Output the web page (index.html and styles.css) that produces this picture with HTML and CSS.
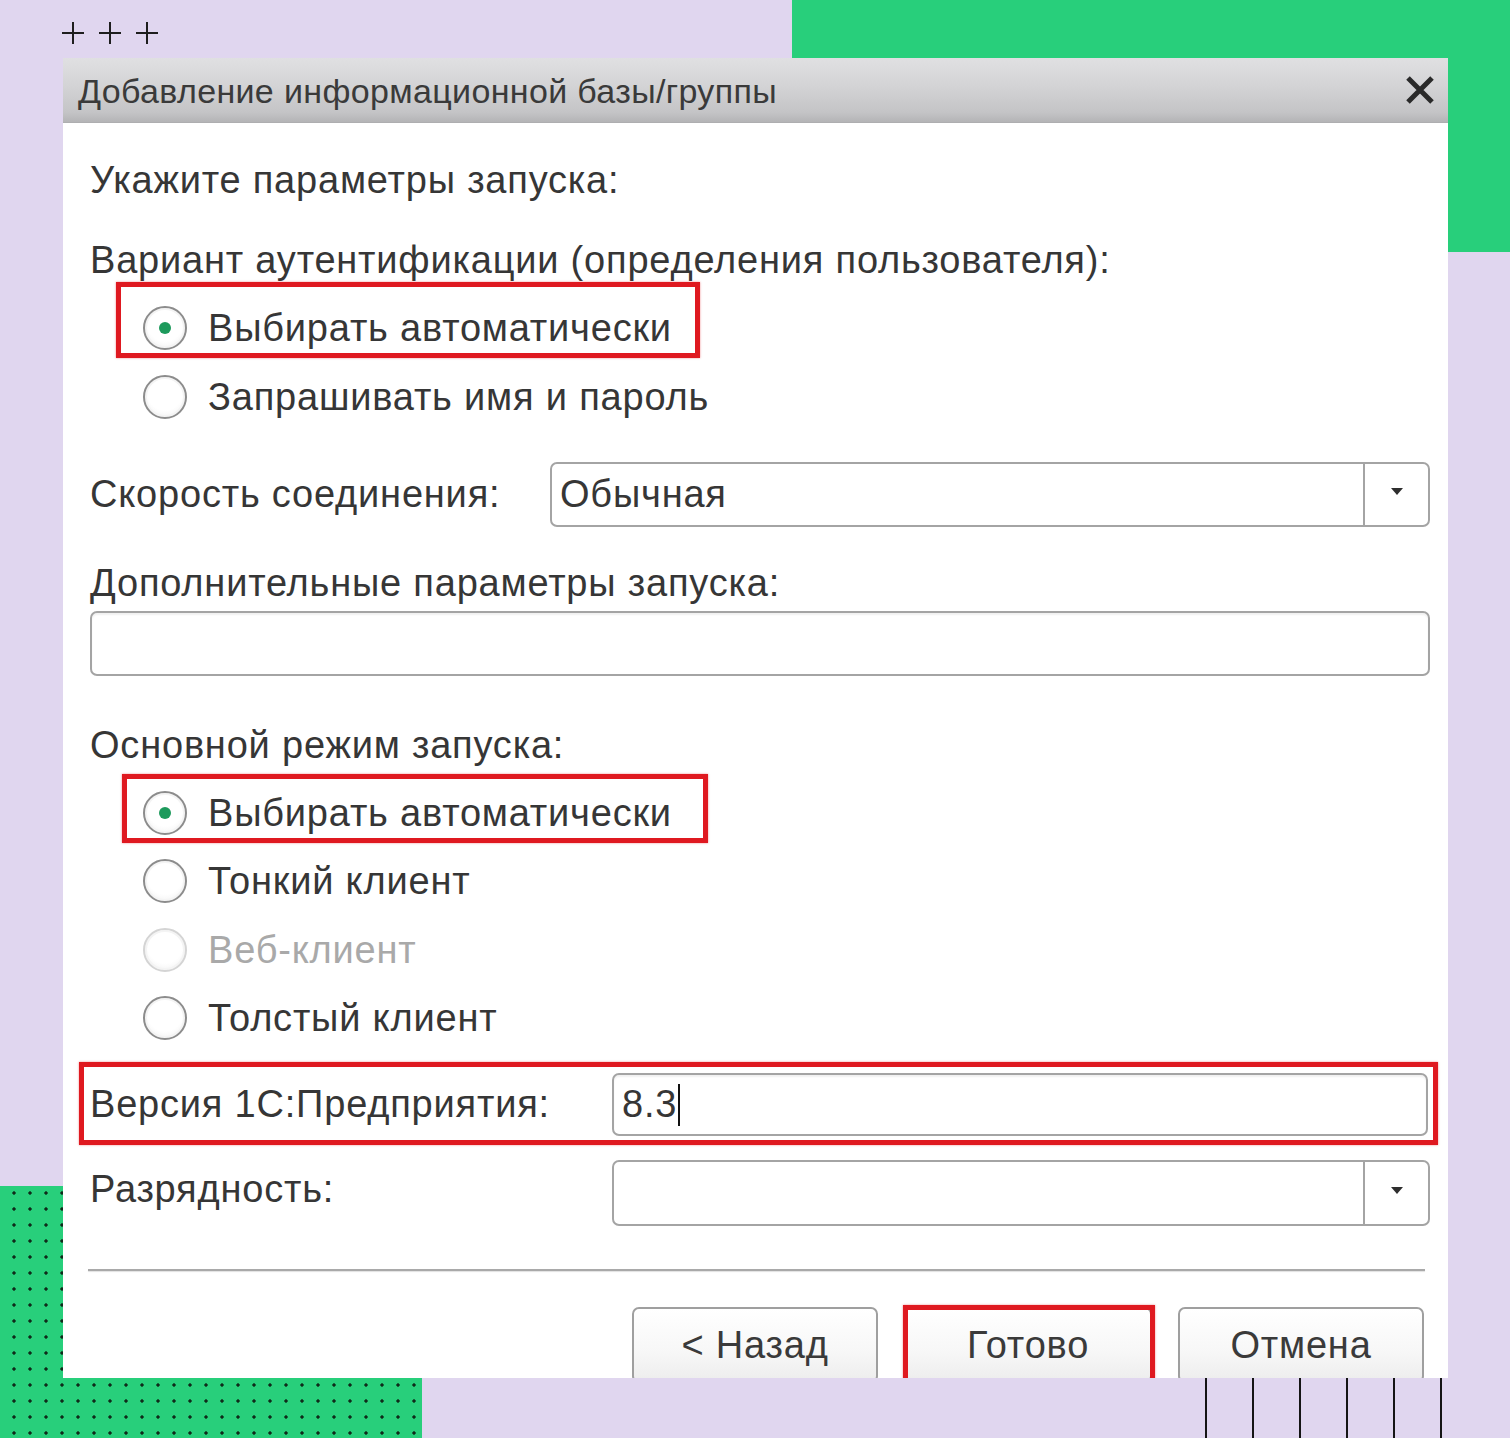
FILE: index.html
```html
<!DOCTYPE html>
<html lang="ru">
<head>
<meta charset="utf-8">
<title>Добавление информационной базы/группы</title>
<link rel="stylesheet" href="styles.css">
</head>
<body>
<div class="canvas">
  <div class="deco-green"></div>
  <div class="deco-dots"></div>
  <div class="deco-lines"></div>
  <svg class="deco-plus" width="110" height="28" viewBox="0 0 110 28">
    <path d="M2 13h22M13 2v22M39 13h22M50 2v22M76 13h22M87 2v22" stroke="#1e1e1e" stroke-width="2" fill="none"/>
  </svg>

  <div class="dialog">
    <div class="titlebar">
      <span class="title">Добавление информационной базы/группы</span>
      <svg class="close" width="30" height="30" viewBox="0 0 30 30">
        <path d="M3 3L27 27M27 3L3 27" stroke="#2a2a2a" stroke-width="5" fill="none"/>
      </svg>
    </div>

    <div class="content">
      <div class="row r-intro">Укажите параметры запуска:</div>
      <div class="row r-auth">Вариант аутентификации (определения пользователя):</div>
      <div class="row radio-row"><span class="radio checked"></span><span>Выбирать автоматически</span></div>
      <div class="row radio-row r-gap1"><span class="radio"></span><span>Запрашивать имя и пароль</span></div>

      <div class="field r-speed">
        <span class="label label-speed">Скорость соединения:</span>
        <div class="select">
          <span class="select-value">Обычная</span>
          <span class="select-btn"><i class="arrow"></i></span>
        </div>
      </div>

      <div class="row r-extra">Дополнительные параметры запуска:</div>
      <div class="input r-extra-input"></div>

      <div class="row r-mode">Основной режим запуска:</div>
      <div class="row radio-row"><span class="radio checked"></span><span>Выбирать автоматически</span></div>
      <div class="row radio-row"><span class="radio"></span><span>Тонкий клиент</span></div>
      <div class="row radio-row r-gap1 disabled"><span class="radio"></span><span>Веб-клиент</span></div>
      <div class="row radio-row"><span class="radio"></span><span>Толстый клиент</span></div>

      <div class="field r-version">
        <span class="label label-version">Версия 1С:Предприятия:</span>
        <div class="input input-version"><span>8.3</span><i class="caret"></i></div>
      </div>

      <div class="field r-bits">
        <span class="label label-version label-top">Разрядность:</span>
        <div class="select">
          <span class="select-value"></span>
          <span class="select-btn"><i class="arrow"></i></span>
        </div>
      </div>

      <div class="separator"></div>

      <div class="buttons">
        <div class="btn btn-back">&lt; Назад</div>
        <div class="btn btn-done">Готово</div>
        <div class="btn btn-cancel">Отмена</div>
      </div>
    </div>

    <div class="mark mark-auth"></div>
    <div class="mark mark-mode"></div>
    <div class="mark mark-version"></div>
    <div class="mark mark-done"></div>
  </div>
</div>
</body>
</html>
```

FILE: styles.css
```css
* { box-sizing: border-box; }

html, body {
  margin: 0;
  padding: 0;
  background: #e0d6ef;
}

.canvas {
  position: relative;
  width: 1510px;
  height: 1438px;
  overflow: hidden;
  background: #e0d6ef;
  font-family: "Liberation Sans", Arial, sans-serif;
}

/* decorations */
.deco-green {
  position: absolute;
  left: 792px;
  top: 0;
  width: 718px;
  height: 252px;
  background: #28cf7b;
}

.deco-dots {
  position: absolute;
  left: 0;
  top: 1186px;
  width: 422px;
  height: 252px;
  background-color: #28cf7b;
  background-image: radial-gradient(circle at 8px 8px, #0f2a1a 0, #0f2a1a 1.4px, transparent 1.9px);
  background-size: 16px 16px;
  background-position: 6px -1px;
}

.deco-lines {
  position: absolute;
  left: 1205px;
  top: 1300px;
  width: 240px;
  height: 138px;
  background-image: repeating-linear-gradient(to right, #151515 0, #151515 2px, transparent 2px, transparent 47px);
}

.deco-plus {
  position: absolute;
  left: 60px;
  top: 20px;
}

/* dialog */
.dialog {
  position: absolute;
  left: 63px;
  top: 58px;
  width: 1385px;
  height: 1320px;
  overflow: hidden;
  background: #ffffff;
  color: #363636;
}

.titlebar {
  height: 65px;
  display: flex;
  align-items: center;
  justify-content: space-between;
  padding: 0 13px 0 15px;
  background: linear-gradient(to bottom, #e0e0e2 0%, #d3d3d5 45%, #c4c4c6 85%, #b4b4b6 100%);
  border-bottom: 1px solid #aeaeb0;
}

.title {
  font-size: 34px;
  letter-spacing: 0.35px;
  color: #3a3a3a;
  padding-top: 2px;
}

.close {
  display: block;
}

.content {
  padding: 0 18px 0 27px;
  display: flex;
  flex-direction: column;
  font-size: 38px;
  letter-spacing: 0.8px;
}

.row {
  height: 68px;
  display: flex;
  align-items: center;
  white-space: nowrap;
}

.r-intro { margin-top: 23px; }
.r-auth { margin-top: 12px; }
.r-gap1 { margin-top: 1px; }

.radio-row {
  padding-left: 53px;
  gap: 21px;
}

.radio {
  width: 44px;
  height: 44px;
  border-radius: 50%;
  border: 2px solid #8c8c8c;
  background: radial-gradient(circle at 50% 40%, #ffffff 55%, #ececec 100%);
  box-shadow: inset 0 0 0 2px #f4f4f4;
  display: flex;
  align-items: center;
  justify-content: center;
  flex: none;
}

.radio.checked::after {
  content: "";
  width: 12px;
  height: 12px;
  border-radius: 50%;
  background: #1d9a5c;
}

.disabled { color: #a9a9a9; }
.disabled .radio { border-color: #d4d4d4; }

.field {
  display: flex;
  align-items: center;
}

.label { flex: none; white-space: nowrap; }
.label-speed { width: 460px; }
.label-version { width: 522px; }
.label-top { align-self: flex-start; padding-top: 8px; }

.r-speed { margin-top: 31px; height: 65px; }

.select {
  flex: 1;
  height: 100%;
  display: flex;
  border: 2px solid #a4a4a4;
  border-radius: 7px;
  background: #fff;
}

.select-value {
  flex: 1;
  display: flex;
  align-items: center;
  padding-left: 8px;
  white-space: nowrap;
}

.select-btn {
  width: 65px;
  border-left: 2px solid #a4a4a4;
  display: flex;
  align-items: center;
  justify-content: center;
}

.arrow {
  width: 0;
  height: 0;
  border-left: 6px solid transparent;
  border-right: 6px solid transparent;
  border-top: 7px solid #2e2e2e;
  margin-bottom: 6px;
}

.r-extra { margin-top: 34px; height: 44px; }

.input {
  border: 2px solid #a4a4a4;
  border-radius: 7px;
  background: #fff;
  box-shadow: inset 0 2px 2px rgba(0, 0, 0, 0.06);
}

.r-extra-input { margin-top: 6px; height: 65px; }

.r-mode { margin-top: 35px; }

.r-version { margin-top: 21px; height: 63px; padding-right: 2px; }

.input-version {
  flex: 1;
  height: 100%;
  display: flex;
  align-items: center;
  padding-left: 8px;
}

.caret {
  width: 2px;
  height: 42px;
  background: #111;
  margin-left: 1px;
}

.r-bits { margin-top: 24px; height: 66px; }

.separator {
  margin: 43px 5px 0 -2px;
  height: 2px;
  background: #a9a9a9;
  box-shadow: 0 1px 1px rgba(0, 0, 0, 0.12);
}

.buttons {
  margin-top: 36px;
  margin-right: 6px;
  display: flex;
  justify-content: flex-end;
  gap: 26px;
}

.btn {
  width: 246px;
  height: 76px;
  border: 2px solid #9f9f9f;
  border-radius: 7px;
  background: linear-gradient(to bottom, #ffffff 0%, #f7f7f7 60%, #ededed 100%);
  display: flex;
  align-items: center;
  justify-content: center;
  font-size: 38px;
  color: #3a3a3a;
}

.btn-done { width: 248px; }

/* red annotation frames */
.mark {
  position: absolute;
  border: 5px solid #df1920;
  box-shadow: 0 0 2px rgba(223, 25, 32, 0.5);
}

.mark-auth { left: 53px; top: 224px; width: 584px; height: 76px; }
.mark-mode { left: 59px; top: 716px; width: 586px; height: 69px; }
.mark-version { left: 16px; top: 1004px; width: 1359px; height: 83px; }
.mark-done { left: 840px; top: 1247px; width: 252px; height: 100px; }
```
